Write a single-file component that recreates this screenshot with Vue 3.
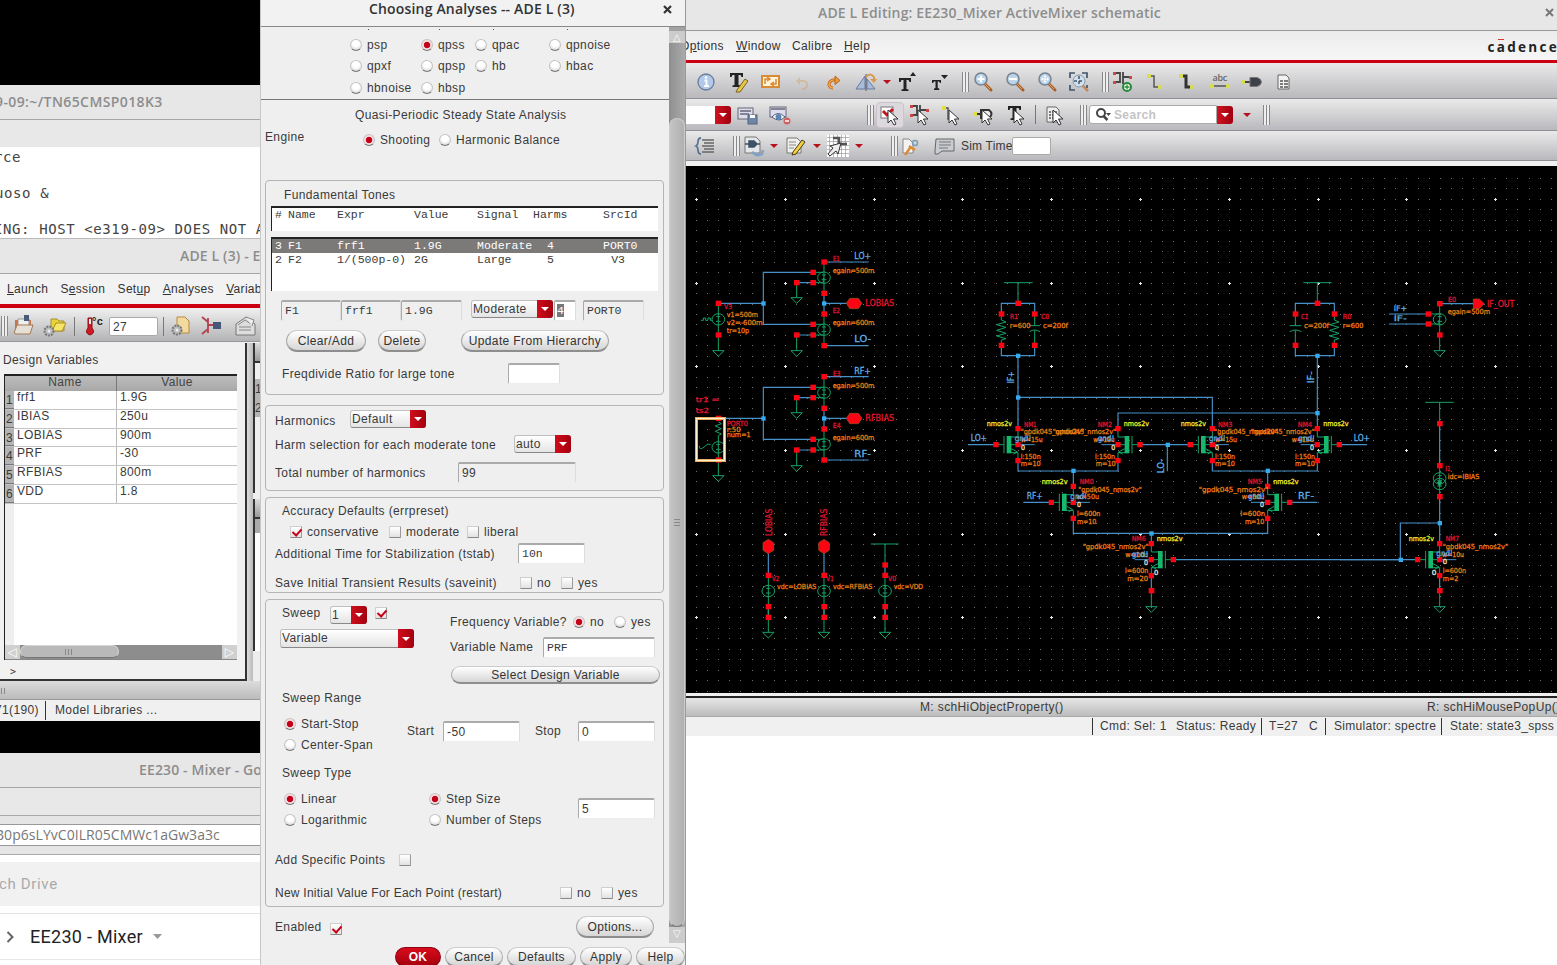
<script setup>
const radiosTop = [
  { t: 'psp' }, { t: 'qpss', on: true }, { t: 'qpac' }, { t: 'qpnoise' },
  { t: 'qpxf' }, { t: 'qpsp' }, { t: 'hb' }, { t: 'hbac' },
  { t: 'hbnoise' }, { t: 'hbsp' }
]
const vars = [
  ['frf1', '1.9G'], ['IBIAS', '250u'], ['LOBIAS', '900m'],
  ['PRF', '-30'], ['RFBIAS', '800m'], ['VDD', '1.8']
]

const cursor = '<path d="M9 6v13l3-3 3 5 2-1-2.500-5h4.500z" fill="#fff" stroke="#333" stroke-width="1"/>'
const glass = (inner) => '<path d="M13 13l6 6" stroke="#a8602c" stroke-width="3" stroke-linecap="round"/><path d="M13 13l5 5" stroke="#e0a060" stroke-width="1"/><circle cx="9" cy="8" r="6" fill="#b9d3e8" stroke="#778290" stroke-width="1.500"/>' + inner
const T = '<path d="M3 2h13v4h-1.500l-1-2H11.500v10l2 .5v1.500h-8V14.500l2-.5V4H5.500l-1 2H3z" fill="#222"/>'
const mosGlyph = '<path d="M2 2h6v5M2 11h6V8M8 2v9M11 1v12M11 6h7" stroke="#444" fill="none" stroke-width="1.800"/><path d="M1 1h3v3H1zM1 10h3v3H1zM17 5h3v3h-3z" fill="#c44"/>'
const icons = {
  info: '<circle cx="11" cy="11" r="8" fill="#b4c9ea" stroke="#697b9a" stroke-width="1.300"/><path d="M9.500 9.500h2V15M9 15.200h5" stroke="#fff" fill="none" stroke-width="1.800"/><circle cx="11" cy="6.500" r="1.300" fill="#fff"/>',
  tedit: T + '<path d="M10 19l8-11 3 2-8 11-4 0z" fill="#e8c840" stroke="#776020"/>',
  swap: '<rect x="3" y="5" width="17" height="11" fill="#fff3d8" stroke="#d98a35" stroke-width="2"/><path d="M6 13V8h4M8 6l3 2-3 2M17 8v5h-4M15 11l-3 2 3 2" stroke="#d98a35" fill="none" stroke-width="1.500"/>',
  undo: '<g opacity=".35"><path d="M7 10h6q4 1 3 5-1 3-5 3" stroke="#d9954a" fill="none" stroke-width="2"/><path d="M9 6l-4 4 4 4" fill="#d9954a"/></g>',
  redo: '<path d="M15 9H10q-4 1-4 5 1 3 4 3" stroke="#c86a18" fill="none" stroke-width="3"/><path d="M15 9H10q-4 1-4 5 1 3 4 3" stroke="#f3b25c" fill="none" stroke-width="1.200"/><path d="M12 5l5 4.500-5 4z" fill="#ee9838" stroke="#b8651a"/>',
  mirror: '<path d="M1 18L10 5v13zM20 18L12 8v10z" fill="#a9bcd9" stroke="#667aa0"/><path d="M11 3v17" stroke="#555"/><path d="M11 6q4-5 8 0v4" stroke="#d99a50" fill="none" stroke-width="2"/><path d="M15 8h7l-3 4z" fill="#d99a50"/>',
  tup: '<path d="M2 7h12v4h-1.500l-1-2H9.500v9l2 .5V20h-7v-1.500l2-.5V9H4.500l-1 2H2zM13 5h6l-3-4z" fill="#222"/>',
  tdn: '<path d="M3 9h9v3h-1l-1-1.500H8.700V17l1.500.5V19H5v-1.500l1.500-.5v-6.500H5L4 12H3zM12 4h7l-3.500 4z" fill="#222"/>',
  zin: glass('<path d="M9 4.500v7M5.500 8h7" stroke="#fff" stroke-width="2.200"/>'),
  zout: glass('<path d="M5 8h8" stroke="#fff" stroke-width="2.200"/>'),
  zfit: glass('<path d="M9 4l2 2H7zM9 12l2-2H7zM5 8l2-2v4zM13 8l-2-2v4z" fill="#fff"/><path d="M9 5v6M6 8h6" stroke="#fff"/>'),
  zsel: '<path d="M14 14l6 6" stroke="#c08a60" stroke-width="2.500"/><circle cx="11" cy="10" r="6" fill="#d0dfec" stroke="#8798a8"/><path d="M2 7V2h5M14 2h5v5M2 14v5h5M19 14v3" stroke="#41566b" fill="none" stroke-width="1.700"/><path d="M11 5v10M6 10h10" stroke="#41566b" stroke-width="1.500" stroke-dasharray="3 2"/>',
  inst: mosGlyph + '<circle cx="15" cy="16" r="4" fill="#fff" stroke="#278a38" stroke-width="2"/><path d="M15 13.500v5M12.500 16h5" stroke="#278a38" stroke-width="1.300"/>',
  wire: '<path d="M5 5h5v11h6" stroke="#555" fill="none" stroke-width="1.500"/><path d="M3 3h4v4H3zM14 14h4v4h-4z" fill="#d8dc50"/>',
  wireb: '<path d="M5 5h5v11h6" stroke="#333" fill="none" stroke-width="3"/><path d="M3 3h4v4H3zM14 14h4v4h-4z" fill="#d8dc50"/>',
  abc: '<text x="11" y="10" text-anchor="middle" font-family="Open Sans, sans-serif" font-size="9" font-weight="600" textLength="15" fill="#666">abc</text><path d="M3 15h16" stroke="#555" stroke-width="1.500"/><path d="M1 13h4v4H1zM17 13h4v4h-4z" fill="#d8dc50"/>',
  pin: '<path d="M2 11h8" stroke="#444" stroke-width="2"/><path d="M9 6.500h7q4 1 4.500 4.500-.5 3.500-4.500 4.500H9z" fill="#3c4048" stroke="#777"/><path d="M0 9h4v4H0z" fill="#d8dc50"/>',
  doc: '<path d="M5 4h8l3 3v11H5z" fill="#f2f2f2" stroke="#666"/><path d="M7 10h3M11 10h4M7 13h3M11 13h4M7 16h3M11 16h4" stroke="#555" stroke-width="1.500"/>',
  save: '<rect x="2" y="4" width="15" height="11" fill="#dde" stroke="#667"/><path d="M4 7h11M4 10h9" stroke="#667" stroke-width="1.500"/><rect x="12" y="11" width="9" height="9" fill="#6e87a8" stroke="#4f6380"/><path d="M14 11h5v3h-5z" fill="#fff"/>',
  eye: '<rect x="2" y="3" width="16" height="10" fill="#dde" stroke="#667"/><path d="M3 5h14" stroke="#667" stroke-width="1.500"/><path d="M4 13q6-7 13 0-6 6-13 0z" fill="#fff" stroke="#557"/><circle cx="10.500" cy="13" r="3" fill="#5b86b0"/><circle cx="19" cy="17" r="3.500" fill="#cf6262"/><path d="M17 17h4" stroke="#fff" stroke-width="1.500"/>',
  sel: '<rect x="2" y="3" width="12" height="11" fill="#fff" stroke="#777"/><path d="M4 7l4 4 6-6" stroke="#c21622" stroke-width="3" fill="none"/>' + cursor,
  inst2: mosGlyph + cursor,
  wire2: '<path d="M4 4h4v11h6" stroke="#555" fill="none" stroke-width="1.500"/><path d="M2 2h4v4H2z" fill="#e0e040"/>' + cursor,
  pin2: '<path d="M2 10h7" stroke="#333" stroke-width="2"/><path d="M8 6h8q5 4 0 8H8z" fill="#eee" stroke="#333" stroke-width="2"/><path d="M0 8h4v4H0z" fill="#e0e040"/>' + cursor,
  text2: T + cursor,
  doc2: '<path d="M3 3h9l3 3v12H3z" fill="#eee" stroke="#666"/><path d="M5 8h2M8 8h5M5 11h2M8 11h5M5 14h2M8 14h5" stroke="#555" stroke-width="1.500"/>' + cursor,
  tree: '<path d="M6 3q-3 0-3 4 0 3-2 4 2 1 2 4 0 4 3 4" stroke="#5a7597" stroke-width="1.800" fill="none"/><path d="M7 5h12M9 8h10M7 11h12M9 14h10M7 17h12" stroke="#666" stroke-width="1.500"/>',
  chk: '<path d="M3 2h11l4 4v12H3z" fill="#e4e6ea" stroke="#777"/><path d="M3 9h4M14 9h4M7 6h5l3 3-3 3H7z" fill="#3d5266" stroke="#3d5266" stroke-width="1.500"/><path d="M10 17q5 5 10 2l1-4" stroke="#7fa2c6" stroke-width="2.500" fill="none"/>',
  note: '<path d="M3 3h10l4 4v11H3z" fill="#f0f0ee" stroke="#777"/><path d="M5 7h7M5 10h7M5 13h5" stroke="#888"/><path d="M9 17l9-12 3 2-9 12-4 1z" fill="#f0cf45" stroke="#4a3a18"/>',
  grid: '<rect width="22" height="22" fill="#fff"/><path d="M2.500 0v22M6.500 0v22M10.500 0v22M14.500 0v22M18.500 0v22M0 2.500h22M0 6.500h22M0 10.500h22M0 14.500h22M0 18.500h22" stroke="#999" stroke-width=".7"/><path d="M6 3h6v6h8" fill="none" stroke="#555" stroke-width="2.500"/><path d="M14 8L3 11l3 2-5 6 2 2 6-5 2 3z" fill="#eee" stroke="#333"/>',
  docgear: '<path d="M3 4h6l4 4v10H3z" fill="#f3f3f3" stroke="#888"/><circle cx="15" cy="8" r="2.500" fill="none" stroke="#7b9db5" stroke-width="1.500"/><path d="M5 20l5-7M9 11l6 4" stroke="#db8b35" stroke-width="2.500"/>',
  chat: '<path d="M3 4h18v12H9l-4 3-3 0v-3z" fill="#c9ccd1" stroke="#666"/><path d="M6 7h12M6 10h12M6 13h9" stroke="#777"/>',
  open: '<path d="M3 5h16v13H3z" fill="#c6764a"/><path d="M6 4h11v9H6z" fill="#eee" stroke="#999"/><path d="M2 18l3-8h16l-3 9H4z" fill="#e6dfd6" stroke="#a47a55"/><path d="M12 0h5v6h-5z" fill="#4b5a78"/>',
  folder: '<path d="M9 4h6l2 2h5v10H9z" fill="#e8d23a" stroke="#a8902a"/><path d="M10 16l4-8h10l-4 8z" fill="#f5e668" stroke="#a8902a"/><circle cx="7" cy="16" r="4.500" fill="#bbb" stroke="#777" stroke-width="2" stroke-dasharray="2 1"/><circle cx="7" cy="16" r="1.500" fill="#eee"/>',
  temp: '<path d="M5 3h4v10q4 5-2 7-6-2-2-7z" fill="#d01a22" stroke="#881018"/><path d="M6 4h2v5H6z" fill="#eee"/><text x="9" y="10" font-family="Liberation Sans, sans-serif" font-weight="bold" font-size="11" fill="#222">°c</text>',
  filegear: '<path d="M7 2h8l4 4v12H7z" fill="#f1d9a0" stroke="#b58b3c"/><circle cx="7" cy="15" r="4.500" fill="#bbb" stroke="#777" stroke-width="2" stroke-dasharray="2 1"/><circle cx="7" cy="15" r="1.500" fill="#eee"/>',
  probe: '<path d="M2 2l6 5v7l-6 5M8 3v15M8 10h7" fill="none" stroke="#b04450" stroke-width="1.800"/><path d="M13 7h8v7h-8z" fill="#47577a"/>',
  env: '<path d="M2 9l10-7 9 7v11H2z" fill="#ddd" stroke="#777"/><path d="M4 10l7-5 6 4M5 12h12M5 15h12" stroke="#888" fill="none"/><path d="M12 2l8 3-2 6" fill="#eee" stroke="#888"/>'
}
const bar1 = ['info', 'tedit', 'swap', 'undo', 'redo', 'mirror', '>', 'tup', 'tdn', '|', 'zin', 'zout', 'zfit', 'zsel', '|', 'inst', 'wire', 'wireb', 'abc', 'pin', 'doc']
const bar3 = ['tree', '|', 'chk', '>', 'note', '>', 'grid', '>', '|', 'docgear', 'chat']

// Grid of the schematic sheet: faint minor dots, a brighter one every eighth step.
const minor = []
const major = []
for (let i = 0; i <= 78; i++) {
  for (let j = 0; j <= 49; j++) {
    const x = Math.round(696 + i * 11.1)
    const y = Math.round(178 + j * 10.46)
    if (i % 8 === 0 && j % 8 === 2) major.push(`M${x - 1} ${y}h3v1h-3zM${x} ${y - 1}h1v3h-1z`)
    else minor.push(`M${x} ${y}h1v1h-1z`)
  }
}
const minorPath = minor.join('')
const majorPath = major.join('')

const R = '#e31530', O = '#f07f14', Y = '#f2f22a', B = '#5fb2ea', W = '#f4eede'
// Text entries: x, y, string, colour, length, size, rotation
const sheets = [
  {
    tf: 'translate(686 240) scale(.33333)',
    wire: 'M414 66H548M381 97H232V253H381M97 190H232M332 128H381M332 285H381M414 160V222M414 190H485M414 317H548M414 410H548M381 442H232V598H381M119 535H232M332 473H381M332 630H381M414 505V567M414 535H485M414 660H548M247 935V1006M247 1100V1132M414 935V1006M414 1100V1132M597 975V1006M597 1100V1132',
    dev: 'M414 66V160M414 222V317M381 97H412M381 128H412V113M381 253H412M381 285H412M332 128V172M332 285V332M97 190V332M45 241h7v-7h7v7h7v-7h7v7h6M414 410V505M414 567V660M381 442H412M381 473H412M381 598H412M381 630H412M332 473V518M332 630V677M97 545l9 6-18 7 18 8-18 8 18 8-9 5V707M40 618q0 12 10 6t12-10 12 0M247 1006V1176M414 1006V1176M597 1006V1176M555 912H638M597 912V975',
    circles: [[414, 113], [414, 269], [97, 238], [414, 458], [414, 613], [97, 622], [247, 1053], [414, 1053], [597, 1053]],
    gnd: [[332, 173], [332, 332], [97, 332], [332, 518], [332, 677], [97, 707], [247, 1177], [414, 1177], [597, 1177]],
    pins: [[414, 66], [381, 97], [381, 128], [332, 128], [414, 160], [414, 222], [381, 253], [381, 285], [332, 285], [414, 317], [97, 190], [97, 285], [414, 410], [381, 442], [381, 473], [332, 473], [414, 505], [414, 567], [381, 598], [381, 630], [332, 630], [414, 660], [97, 535], [97, 660], [247, 1006], [247, 1100], [247, 1132], [414, 1006], [414, 1100], [414, 1132], [597, 975], [597, 1006], [597, 1100], [597, 1132]],
    nodes: [[232, 190], [414, 190], [232, 535], [414, 535]],
    mos: [],
    terms: 'M481 190l10-15h26l11 15-11 16h-26zM481 535l10-15h26l11 15-11 16h-26zM247 898l16 10v23l-16 10-16-10v-23zM414 898l16 10v23l-16 10-16-10v-23z',
    texts: [
      [441, 63, 'E1', R, 20], [505, 56, 'LO+', B, 50, 25], [440, 98, 'egain=500m', O, 125], [538, 199, 'LOBIAS', R, 86, 25],
      [440, 218, 'E2', R, 22], [440, 254, 'egain=600m', O, 125], [505, 307, 'LO-', B, 50, 25],
      [114, 207, 'V3', R, 24], [122, 232, 'v1=500m', O, 94], [122, 254, 'v2=-600m', O, 108], [122, 278, 'tr=10p', O, 67],
      [441, 408, 'E3', R, 22], [505, 401, 'RF+', B, 50, 25], [440, 443, 'egain=500m', O, 125], [538, 544, 'RFBIAS', R, 86, 25],
      [440, 564, 'E4', R, 24], [440, 599, 'egain=600m', O, 125], [505, 652, 'RF-', B, 50, 25],
      [29, 487, 'tr1 =', R, 70], [29, 519, 'ts2', R, 40], [122, 559, 'PORT0', R, 64], [122, 576, 'r:50', O, 42], [122, 591, 'num=1', O, 72],
      [257, 888, 'LOBIAS', R, 82, 25, -90], [424, 888, 'RFBIAS', R, 82, 25, -90],
      [258, 1022, 'V2', R, 22], [421, 1022, 'V1', R, 22], [606, 1022, 'V0', R, 24],
      [273, 1046, 'vdc=LOBIAS', O, 118], [441, 1046, 'vdc=RFBIAS', O, 118], [623, 1046, 'vdc=VDD', O, 88]
    ]
  },
  {
    tf: 'translate(960 270) scale(.33333)',
    wire: 'M124 132V100H224V132M124 226V257H224V226M174 257V476M174 382H757V476M474 476V429H1072M1072 257V476M1006 132V100H1123V132M1006 226V257H1123V226M24 524H108M541 524H690M622 524V604M1140 524H1221M174 572V603H474V572M757 572V603H1072V572M340 603V650M923 603V650M190 697H274M990 697H1072M340 744V790H923V744M574 790V822M640 869H1320M574 916V962',
    dev: 'M132 38H218M174 38V100M1030 38H1115M1072 38V100M124 132V150l14 6-28 8 28 8-28 9 28 9-28 8 28 8-14 4V226M224 132V167M209 167H240M209 185q15-10 31 0M224 181V226M1006 132V167M989 167H1024M989 185q17-10 35 0M1006 181V226M1123 132V150l14 6-28 8 28 8-28 9 28 9-28 8 28 8-14 4V226M574 962V1010',
    circles: [],
    gnd: [[574, 1010]],
    pins: [[174, 100], [124, 132], [224, 132], [124, 226], [224, 226], [1072, 100], [1006, 132], [1123, 132], [1006, 226], [1123, 226], [574, 962]],
    nodes: [[174, 257], [1072, 257], [174, 382], [1072, 429], [623, 524], [340, 602], [923, 602], [574, 790]],
    mos: [[174, 524, 1], [474, 524, -1], [757, 524, 1], [1072, 524, -1], [340, 697, 1], [923, 697, -1], [574, 869, -1]],
    terms: '',
    texts: [
      [150, 148, 'R1', R, 24], [243, 148, 'C0', R, 25], [149, 173, 'r=600', O, 62], [249, 173, 'c=200f', O, 75],
      [1023, 148, 'C1', R, 22], [1032, 173, 'c=200f', O, 75], [1148, 148, 'R0', R, 26], [1148, 173, 'r=600', O, 62],
      [162, 340, 'IF+', B, 36, 25, -90], [1062, 340, 'IF-', B, 36, 25, -90],
      [80, 469, 'nmos2v', Y, 76], [192, 470, 'NM1', R, 38], [413, 470, 'NM2', R, 43], [491, 469, 'nmos2v', Y, 76],
      [662, 469, 'nmos2v', Y, 76], [774, 470, 'NM3', R, 43], [1013, 470, 'NM4', R, 43], [1090, 469, 'nmos2v', Y, 76],
      [182, 492, '"gpdk045_nmos2v"', O, 190], [278, 492, '"gpdk045_nmos2v"', O, 190],
      [763, 492, '"gpdk045_nmos2v"', O, 190], [874, 492, '"gpdk045_nmos2v"', O, 190],
      [182, 515, 'w=15u', O, 66], [400, 515, 'w=15u', O, 64], [765, 515, 'w=15u', O, 66], [995, 515, 'w=15u', O, 66],
      [164, 514, 'gnd!', B, 50, 24], [413, 514, 'gnd!', B, 50, 24], [747, 514, 'gnd!', B, 50, 24], [1015, 514, 'gnd!', B, 50, 24],
      [182, 566, 'l:150n', O, 60], [182, 588, 'm=10', O, 60], [405, 566, 'l:150n', O, 60], [407, 588, 'm=10', O, 60],
      [765, 566, 'l:150n', O, 60], [765, 588, 'm=10', O, 60], [1005, 566, 'l:150n', O, 60], [1005, 588, 'm=10', O, 60],
      [32, 514, 'LO+', B, 49, 25], [1181, 514, 'LO+', B, 49, 25], [613, 610, 'LO-', B, 44, 25, -90],
      [183, 540, '0', W, 12], [454, 540, '0', W, 12], [765, 540, '0', W, 12], [1050, 540, '0', W, 12],
      [245, 642, 'nmos2v', Y, 78], [359, 642, 'NM0', R, 42], [863, 642, 'NM5', R, 43], [940, 641, 'nmos2v', Y, 76],
      [355, 666, '"gpdk045_nmos2v"', O, 190], [716, 666, '"gpdk045_nmos2v"', O, 210],
      [349, 688, 'w=50u', O, 68], [845, 688, 'w=50u', O, 68], [331, 687, 'gnd!', B, 50, 24], [864, 687, 'gnd!', B, 50, 24],
      [351, 712, '0', W, 12], [900, 712, '0', W, 12],
      [351, 737, 'l=600n', O, 70], [351, 761, 'm=10', O, 58], [841, 737, 'l=600n', O, 74], [855, 761, 'm=10', O, 58],
      [200, 687, 'RF+', B, 48, 25], [1014, 687, 'RF-', B, 48, 25],
      [515, 814, 'NM6', R, 42], [590, 814, 'nmos2v', Y, 78], [368, 838, '"gpdk045_nmos2v"', O, 198],
      [496, 861, 'w=10u', O, 68], [515, 860, 'gnd!', B, 50, 24], [552, 884, '0', W, 12], [582, 915, '0', W, 13],
      [495, 909, 'l=600n', O, 70], [502, 933, 'm=20', O, 62]
    ]
  },
  {
    tf: 'translate(1340 280) scale(.33333)',
    wire: 'M299 71H400M147 102H265M147 132H265M299 431V557M299 650V791M299 729H181V839H232M0 839H232M299 886V932',
    dev: 'M299 71V212M265 102H297M265 132H297V120M256 367H341M299 367V431M299 557V650M299 932V980',
    circles: [[299, 118], [299, 595], [299, 612]],
    gnd: [[299, 212], [299, 980]],
    pins: [[299, 71], [265, 102], [265, 132], [299, 165], [299, 431], [299, 557], [299, 650], [299, 932]],
    nodes: [[299, 729], [182, 839]],
    mos: [[299, 839, 1]],
    terms: 'M400 57h18l15 14-15 15h-18z',
    texts: [
      [324, 66, 'E0', R, 24], [323, 103, 'egain=500m', O, 127], [441, 80, 'IF_OUT', R, 82, 25],
      [161, 92, 'IF+', B, 40, 23], [161, 122, 'IF-', B, 40, 23],
      [316, 574, 'I1', R, 16], [323, 597, 'idc=IBIAS', O, 95],
      [206, 784, 'nmos2v', Y, 76], [317, 784, 'NM7', R, 40], [308, 807, '"gpdk045_nmos2v"', O, 196],
      [306, 831, 'w=10u', O, 66], [289, 829, 'gnd!', B, 50, 24], [308, 853, '0', W, 13], [275, 884, '0', W, 14],
      [308, 880, 'l=600n', O, 70], [308, 902, 'm=2', O, 47]
    ]
  }
]
</script>

<template>
  <main class="desk">
    <section class="win term">
      <header class="ttl"><span>9-09:~/TN65CMSP018K3</span></header>
      <div class="strip"></div>
      <pre class="shell"><span>rce</span><span>uoso &amp;</span><span>ING: HOST &lt;e319-09&gt; DOES NOT A</span></pre>
    </section>

    <section class="win ade">
      <header class="ttl"><span>ADE L (3) - E</span></header>
      <nav class="menu"><span><u>L</u>aunch</span><span>S<u>e</u>ssion</span><span>Set<u>u</u>p</span><span><u>A</u>nalyses</span><span><u>V</u>ariables</span></nav>
      <div class="adebar">
        <i class="grip"></i>
        <svg class="ic" v-html="icons.open"></svg>
        <svg class="ic" v-html="icons.folder"></svg>
        <i class="vl"></i>
        <svg class="ic" v-html="icons.temp"></svg>
        <span class="deg">27</span>
        <i class="vl"></i>
        <svg class="ic" v-html="icons.filegear"></svg>
        <svg class="ic" v-html="icons.probe"></svg>
        <svg class="ic" v-html="icons.env"></svg>
      </div>
      <div class="adebody">
        <div class="dv">
          <div class="dvt">Design Variables</div>
          <div class="tbl">
            <div class="th"><span></span><span>Name</span><span>Value</span></div>
            <div v-for="(v, i) in vars" :key="v[0]" class="tr"><b>{{ i + 1 }}</b><span>{{ v[0] }}</span><span>{{ v[1] }}</span></div>
            <div class="fill"></div>
            <div class="hs"><i>◁</i><div><em><i class="grip sm"></i></em></div><i>▷</i></div>
          </div>
          <div class="prompt">&gt;</div>
        </div>
        <div class="gut"></div>
        <div class="side">
          <div class="s1"></div><div class="s2"><span>1</span><span>2</span></div><div class="s3"></div><div class="s4"></div>
        </div>
      </div>
      <div class="adehint"><i class="grip sm"></i></div>
      <footer class="adefoot"><span>71(190)</span><i></i><span>Model Libraries ...</span></footer>
    </section>

    <section class="win web">
      <header class="ttl"><span>EE230 - Mixer - Go</span></header>
      <div class="tabs"></div>
      <div class="url"><span>B0p6sLYvC0ILR05CMWc1aGw3a3c</span></div>
      <div class="srch"><span>ch Drive</span></div>
      <div class="crumb">
        <svg width="10" height="14"><path d="M1.500 2l5 5-5 5" fill="none" stroke="#666" stroke-width="2" /></svg>
        <span>EE230 - Mixer</span>
        <svg width="10" height="6"><path d="M0 0h9l-4.500 5z" fill="#999" /></svg>
      </div>
    </section>

    <section class="win sch">
      <header class="ttl big"><span>ADE L Editing: EE230_Mixer ActiveMixer schematic</span><svg class="x" viewBox="0 0 10 10"><path d="M1 1l7 7M8 1l-7 7" /></svg></header>
      <nav class="menu smenu">
        <span>O<u>p</u>tions</span><span><u>W</u>indow</span><span>Calibre</span><span><u>H</u>elp</span>
        <div class="logo">c<span>a<i></i></span>dence</div>
      </nav>
      <div class="bar b1">
        <template v-for="(k, i) in bar1" :key="i">
          <i v-if="k === '|'" class="grip"></i>
          <i v-else-if="k === '>'" class="car"></i>
          <svg v-else class="ic" v-html="icons[k]"></svg>
        </template>
      </div>
      <div class="bar b2">
        <div class="cbx"></div><div class="redb"><i></i></div>
        <svg class="ic" v-html="icons.save"></svg>
        <svg class="ic" v-html="icons.eye"></svg>
        <i class="grip first"></i>
        <div class="hot"><svg class="ic" v-html="icons.sel"></svg></div>
        <svg class="ic" v-html="icons.inst2"></svg>
        <svg class="ic" v-html="icons.wire2"></svg>
        <svg class="ic" v-html="icons.pin2"></svg>
        <svg class="ic" v-html="icons.text2"></svg>
        <i class="vl"></i>
        <svg class="ic" v-html="icons.doc2"></svg>
        <i class="grip"></i>
        <div class="find"><svg width="18" height="16"><circle cx="7" cy="6" r="4" fill="none" stroke="#444" stroke-width="2" /><path d="M9.500 9l4 4" stroke="#444" stroke-width="2.500" /><path d="M12 6h5l-2.500 3z" fill="#444" /></svg><span>Search</span></div>
        <div class="redb"><i></i></div>
        <i class="car"></i>
        <i class="grip"></i>
      </div>
      <div class="bar b3">
        <template v-for="(k, i) in bar3" :key="i">
          <i v-if="k === '|'" class="grip"></i>
          <i v-else-if="k === '>'" class="car"></i>
          <svg v-else class="ic" v-html="icons[k]"></svg>
        </template>
        <span class="sim">Sim Time</span><div class="simin"></div>
      </div>
      <svg class="canvas" viewBox="686 166 871 527">
        <path :d="minorPath" fill="#6f7076" />
        <path :d="majorPath" fill="#e8e8e8" />
        <g v-for="(s, n) in sheets" :key="n" :transform="s.tf" fill="none" stroke-width="3">
          <path :d="s.wire" stroke="#4791c9" stroke-width="3.500" />
          <g stroke="#17a368">
            <path :d="s.dev" />
            <path v-for="(g, i) in s.gnd" :key="'g' + i" :d="`M${g[0] - 17} ${g[1]}h34l-17 17z`" />
            <g v-for="(c, i) in s.circles" :key="'c' + i">
              <ellipse :cx="c[0]" :cy="c[1]" rx="19" ry="17" />
              <path :d="`M${c[0] - 6} ${c[1] - 8}h12M${c[0] - 7} ${c[1] + 6}h14`" />
            </g>
            <g v-for="(m, i) in s.mos" :key="'m' + i" :transform="`translate(${m[0]} ${m[1]}) scale(${m[2]} 1)`">
              <path d="M0 0H50" stroke="#4791c9" />
              <path d="M-66 0H-42M-42-26V26M-22-23H0V-48M-22 0H0M-22 24H0V48M-20 12l18 10-12 6" />
              <rect x="-34" y="-26" width="14" height="52" fill="#17b86e" stroke="none" />
              <path d="M-8-56H8v16H-8zM-8 40H8v16H-8zM-8-8H8V8H-8zM-74-8h16V8h-16z" fill="#fb0414" stroke="none" />
            </g>
          </g>
          <path v-for="(p, i) in s.pins" :key="'p' + i" :d="`M${p[0] - 8} ${p[1] - 8}h17v16h-17z`" fill="#fb0414" />
          <path v-for="(p, i) in s.nodes" :key="'n' + i" :d="`M${p[0] - 6} ${p[1] - 6}h13v13h-13z`" fill="#35aaf0" />
          <path v-if="s.terms" :d="s.terms" fill="#fb0414" stroke="#8a5a20" stroke-width="2" />
          <text v-for="(t, i) in s.texts" :key="'t' + i" :transform="`translate(${t[0]} ${t[1]}) rotate(${t[6] || 0})`" :fill="t[3]" :stroke="t[3]" stroke-width=".8" :textLength="t[4]" :font-size="t[5] || 21" lengthAdjust="spacingAndGlyphs" class="lbl">{{ t[2] }}</text>
        </g>
        <path d="M1437 482h5l-2.500 5z" fill="#17b86e" />
        <path d="M696.500 418.500h28v42h-28z" fill="none" stroke="#e9ad63" stroke-width="3" />
        <path d="M696.500 418.500h28v42h-28z" fill="none" stroke="#fff0cf" stroke-width="1" />
      </svg>
      <div class="mouse"><span></span><span>M: schHiObjectProperty()</span><span>R: schHiMousePopUp()</span></div>
      <footer class="stat"><span>Cmd: Sel: 1</span><span>Status: Ready</span><span>T=27</span><span>C</span><span>Simulator: spectre</span><span>State: state3_spss</span></footer>
    </section>

    <section class="win dlg">
      <header class="dt"><span>Choosing Analyses -- ADE L (3)</span><svg class="x" viewBox="0 0 10 10"><path d="M1 1l7 7M8 1l-7 7" /></svg></header>
      <div class="dmain">
        <div class="pane">
          <div class="tails"><i></i><i></i><i></i><i></i></div>
          <div class="rads"><label v-for="r in radiosTop" :key="r.t"><i class="rd" :class="{ on: r.on }"></i>{{ r.t }}</label></div>
          <div class="qt">Quasi-Periodic Steady State Analysis</div>
          <div class="row eng"><span>Engine</span><label><i class="rd on"></i>Shooting</label><label><i class="rd"></i>Harmonic Balance</label></div>

          <div class="fs f1">
            <div class="cap">Fundamental Tones</div>
            <div class="lst lh"><div><span>#</span><span>Name</span><span>Expr</span><span>Value</span><span>Signal</span><span>Harms</span><span>SrcId</span></div></div>
            <div class="lst lb">
              <div class="hl"><span>3</span><span>F1</span><span>frf1</span><span>1.9G</span><span>Moderate</span><span>4</span><span>PORT0</span></div>
              <div><span>2</span><span>F2</span><span>1/(500p-0)</span><span>2G</span><span>Large</span><span>5</span><span>V3</span></div>
            </div>
            <div class="row ed">
              <div class="in ro">F1</div><div class="in ro">frf1</div><div class="in ro">1.9G</div>
              <div class="cb"><span>Moderate</span><i></i></div><div class="in four"><mark>4</mark></div><div class="in ro">PORT0</div>
            </div>
            <div class="row bt"><button>Clear/Add</button><button>Delete</button><button>Update From Hierarchy</button></div>
            <div class="row fq"><span>Freqdivide Ratio for large tone</span><div class="in"></div></div>
          </div>

          <div class="fs f2">
            <div class="row h1"><span>Harmonics</span><div class="cb"><span>Default</span><i></i></div></div>
            <div class="row h2"><span>Harm selection for each moderate tone</span><div class="cb"><span>auto</span><i></i></div></div>
            <div class="row h3"><span>Total number of harmonics</span><div class="in ro sans">99</div></div>
          </div>

          <div class="fs f3">
            <div class="cap">Accuracy Defaults (errpreset)</div>
            <div class="row a1"><label><i class="ck on"></i>conservative</label><label><i class="ck"></i>moderate</label><label><i class="ck"></i>liberal</label></div>
            <div class="row a2"><span>Additional Time for Stabilization (tstab)</span><div class="in">10n</div></div>
            <div class="row a3"><span>Save Initial Transient Results (saveinit)</span><label><i class="ck"></i>no</label><label><i class="ck"></i>yes</label></div>
          </div>

          <div class="fs f4">
            <div class="two">
              <div class="lc">
                <div class="row sw"><span>Sweep</span><div class="cb"><span>1</span><i></i></div><i class="ck on"></i></div>
                <div class="cb wide"><span>Variable</span><i></i></div>
              </div>
              <div class="rc">
                <div class="row v1"><span>Frequency Variable?</span><label><i class="rd on"></i>no</label><label><i class="rd"></i>yes</label></div>
                <div class="row v2"><span>Variable Name</span><div class="in">PRF</div></div>
                <button>Select Design Variable</button>
              </div>
            </div>
            <div class="cap c2">Sweep Range</div>
            <div class="row s">
              <div class="st"><label><i class="rd on"></i>Start-Stop</label><label><i class="rd"></i>Center-Span</label></div>
              <span>Start</span><div class="in sans">-50</div><span class="stop">Stop</span><div class="in sans">0</div>
            </div>
            <div class="cap c3">Sweep Type</div>
            <div class="row t">
              <div class="st"><label><i class="rd on"></i>Linear</label><label><i class="rd"></i>Logarithmic</label></div>
              <div class="st"><label><i class="rd on"></i>Step Size</label><label><i class="rd"></i>Number of Steps</label></div>
              <div class="in sans">5</div>
            </div>
            <div class="row p1"><span>Add Specific Points</span><i class="ck"></i></div>
            <div class="row p2"><span>New Initial Value For Each Point (restart)</span><label><i class="ck"></i>no</label><label><i class="ck"></i>yes</label></div>
          </div>
          <div class="row en"><span>Enabled</span><i class="ck on"></i><button>Options...</button></div>
        </div>
        <div class="vs"><i>△</i><div class="trk"><em><i></i></em></div><i>▽</i></div>
      </div>
      <footer class="acts"><button class="ok">OK</button><button>Cancel</button><button>Defaults</button><button>Apply</button><button>Help</button></footer>
    </section>
  </main>
</template>

<style>
body { margin: 0; overflow: hidden; background: #fff; }
</style>

<style scoped>
* { box-sizing: border-box; }
.desk { position: relative; width: 1557px; height: 965px; overflow: hidden; background: #fff; font: 12px/14px "Liberation Sans", sans-serif; letter-spacing: .37px; color: #3a3a3a; white-space: nowrap; }
.desk i { font-style: normal; }
.win { position: absolute; overflow: hidden; display: flex; flex-direction: column; }
.ttl { display: flex; align-items: center; flex: none; background: #e7e7e7; border-bottom: 1px solid #a5a5a5; color: #8d8d8d; font: 600 14px/20px "Open Sans", "Noto Sans", sans-serif; letter-spacing: .14px; }
.term { left: 0; top: 0; width: 260px; height: 238px; border-top: 85px solid #000; background: #fff; }
.term .ttl { height: 35px; letter-spacing: .4px; }
.term .ttl span { margin-left: -5px; }
.strip { height: 27px; flex: none; background: #e8e8e8; }
.shell { margin: 0; display: flex; flex-direction: column; font: 14px/36px "DejaVu Sans Mono", monospace; letter-spacing: .6px; color: #444; margin-top: -8px; }
.shell span:nth-child(1) { margin-left: -6px; }
.shell span:nth-child(2) { margin-left: -5px; }
.shell span:nth-child(3) { margin-left: -6px; }

.ade { left: 0; top: 238px; width: 260px; height: 515px; background: #f0f0f0; border-bottom: 32px solid #000; }
.ade .ttl { height: 36px; padding-left: 180px; border-top: 1px solid #bbb; }
.menu { display: flex; align-items: center; flex: none; color: #333; background: #f2f2f2; }
.ade .menu { height: 30px; padding-left: 7px; gap: 12.300px; letter-spacing: .3px; }
.adebar { height: 38px; flex: none; border-top: 4px solid #cc0011; background: linear-gradient(#f0f0f0, #b4b4b6); display: grid; grid-template-columns: 9px 28px 32px 10px 29px 50px 10px 26px 34px 34px; align-items: center; border-bottom: 1px solid #999; padding-top: 3px; }
.ic { width: 22px; height: 22px; display: block; overflow: visible; justify-self: center; }
.grip { display: block; width: 7px; height: 20px; background: repeating-linear-gradient(90deg, #888 0 1px, #eee 1px 3px); justify-self: center; }
.grip.sm { height: 6px; width: 9px; background: repeating-linear-gradient(90deg, #888 0 1px, transparent 1px 3px); }
.vl { display: block; width: 1px; height: 19px; background: #777; justify-self: center; }
.deg { height: 19px; margin-left: 1px; border: 1px solid #aaa; border-radius: 2px; background: #fff; padding: 2px 3px; }
.adebody { display: flex; height: 339px; flex: none; padding-top: 1px; }
.dv { width: 247px; border-right: 2px solid #333; border-bottom: 2px solid #333; display: flex; flex-direction: column; padding-left: 4px; background: #f1f1f1; }
.dvt { height: 31px; line-height: 35px; margin-left: -1px; flex: none; }
.tbl { width: 233px; height: 286px; border-top: 2px solid #222; border-left: 1px solid #222; display: flex; flex-direction: column; background: linear-gradient(90deg, #efefef 0 9px, #fff 9px); }
.th { display: grid; grid-template-columns: 9px 102px 1fr; height: 15px; line-height: 13px; flex: none; background: linear-gradient(#bdbdbd, #a8a8a8); text-align: center; color: #444; }
.th span:nth-child(3) { border-left: 1px solid #777; }
.tr { display: grid; grid-template-columns: 9px 102px 1fr; height: 18.800px; flex: none; border-bottom: 1px solid #c4c4c4; }
.tr b { font-weight: 400; background: #b3b3b3; border-bottom: 1px solid #777; line-height: 19px; overflow: hidden; text-indent: 1px; }
.tr span { padding-left: 3px; line-height: 12px; }
.tr span:nth-child(3) { border-left: 1px solid #bbb; }
.fill { flex: 1; }
.hs { height: 15px; flex: none; display: grid; grid-template-columns: 15px 1fr 15px; background: #d0d0d0; border-bottom: 1px solid #888; color: #fff; font-family: "DejaVu Sans", sans-serif; text-align: center; }
.hs > div { background: #8d8d8d; }
.hs em { display: flex; align-items: center; justify-content: center; width: 99px; height: 13px; border-radius: 8px; background: #b9b9b9; border: 1px solid #d5d5d5; border-bottom-color: #777; }
.prompt { padding: 5px 6px 0; font-family: "DejaVu Sans Mono", monospace; font-size: 10px; }
.gut { width: 6px; background: linear-gradient(90deg, #ddd, #bbb); }
.side { width: 7px; display: flex; flex-direction: column; background: #eee; }
.side > div { border-left: 2px solid #333; }
.s1 { height: 20px; background: linear-gradient(#ddd, #999); border-bottom: 2px solid #333; }
.s2 { height: 130px; display: flex; flex-direction: column; padding-top: 16px; line-height: 20px; }
.s2 span { background: #b3b3b3; overflow: hidden; height: 19px; }
.s3 { margin-top: 6px; height: 20px; background: linear-gradient(#ddd, #999); border-bottom: 2px solid #333; }
.s4 { height: 132px; background: linear-gradient(#aaa 0 14px, #fff 14px); }
.adehint { height: 19px; flex: none; background: linear-gradient(#dcdcdc, #bbb); border-bottom: 1px solid #999; padding: 7px 0 0 1px; }
.adehint .grip { width: 6px; justify-self: start; }
.adefoot { display: flex; align-items: center; height: 20px; background: #f0f0f0; }
.adefoot span:first-child { margin-left: -5px; width: 50px; }
.adefoot i { width: 1px; height: 19px; background: #333; margin-right: 9px; }

.web { left: 0; top: 753px; width: 260px; height: 212px; background: #fff; }
.web .ttl { height: 35px; padding-left: 139px; }
.tabs { height: 28px; flex: none; background: #e8e8e8; border-bottom: 1px solid #aaa; }
.url { height: 39px; flex: none; padding: 8px 0; background: #e5e5e5; border-bottom: 1px solid #aaa; display: flex; }
.url span { flex: 1; height: 22px; background: #fff; border: solid #999; border-width: 1px 0; font: 14px/20px "Open Sans", sans-serif; color: #777; letter-spacing: .05px; text-indent: -5px; }
.srch { height: 59px; flex: none; padding: 7px 0; border-bottom: 1px solid #e4e4e4; display: flex; }
.srch span { flex: 1; background: #f1f1f1; color: #aaa; font: 15px/44px Roboto, sans-serif; letter-spacing: .65px; text-indent: -1px; }
.crumb { display: flex; align-items: center; height: 46px; border-bottom: 1px solid #e6e6e6; padding-left: 6px; font: 18px/24px Roboto, sans-serif; letter-spacing: .28px; color: #222; }
.crumb span { margin: 0 10px 0 14px; }

.sch { left: 686px; top: 0; width: 871px; height: 736px; background: #f0f0f0; }
.sch .ttl { height: 31px; padding: 0 0 4px 132px; border-color: #999; }
.x { width: 10px; height: 10px; stroke: #777; stroke-width: 2; fill: none; }
.sch .ttl span { width: 727px; }
.smenu { height: 29px; padding-left: 2px; background: linear-gradient(#ececec, #f6f6f6); }
.smenu > span:nth-child(1) { width: 56px; margin-left: -8px; }
.smenu > span:nth-child(2) { width: 56px; margin-left: 0; }
.smenu > span:nth-child(3) { width: 52px; }
.smenu > span:nth-child(4) { width: 52px; }
.logo { margin-left: auto; margin-top: 3px; font: 700 13.500px/14px "Open Sans", sans-serif; letter-spacing: 2.300px; color: #222; margin-right: -2px; }
.logo span { position: relative; }
.logo i { position: absolute; left: 1px; top: 1px; width: 6px; height: 1px; background: #d33; }
.bar { flex: none; display: grid; align-items: center; background: linear-gradient(#eaeaea, #b9b9bd); border-bottom: 1px solid #8f8f95; }
.b1 { height: 39px; border-top: 3px solid #cc0011; grid-template-columns: repeat(6, 32px) 10px 32px 32px 11px repeat(4, 32px) 12px repeat(6, 32.200px); padding: 3px 0 0 4px; }
.b1 > .grip { justify-self: end; margin-right: -2px; }
.b2 { height: 32px; grid-template-columns: 29px 16px 32px 32px 75px 34px 31px 32px 33px 31px 8px 32px 18px 128px 16px 28px 9px; }
.b2 > .grip { justify-self: end; margin-right: 2px; }
.b2 > .grip.first { margin-right: -4px; }
.b2 > .grip:last-child { margin: 0; }
.b3 { height: 30px; padding-left: 4px; grid-template-columns: 32px 20px 22px 20px 22px 22px 20px 22px 30px 33px 22px 57px 39px; }
.b3 > .grip { justify-self: end; margin-right: 2px; }
.b3 > .ic:nth-child(10) { justify-self: start; }
.sim { margin-left: 6px; letter-spacing: .2px; }
.simin { width: 39px; height: 18px; background: #fff; border: 1px solid #aaa; border-radius: 2px; }
.car { width: 0; height: 0; border: 4px solid transparent; border-top-color: #b5121d; border-bottom: 0; justify-self: center; flex: none; }
.cbx { height: 18px; background: #fff; }
.redb { height: 18px; background: linear-gradient(90deg, #cf1420, #a00010); border-radius: 0 3px 3px 0; display: flex; align-items: center; justify-content: center; }
.redb i, .cb > i::after { content: ""; width: 0; height: 0; border: 4px solid transparent; border-top-color: #fff; border-bottom: 0; }
.hot { width: 28px; height: 26px; border-radius: 4px; background: #ddd8dd; border: 1px solid #cbc5cb; display: flex; align-items: center; justify-content: center; margin-left: 6px; }
.find { height: 19px; background: #fff; border: 1px solid #aaa; border-radius: 3px 0 0 3px; display: flex; align-items: center; padding-left: 4px; color: #c4c4c4; font-weight: bold; gap: 2px; }
.canvas { flex: none; width: 871px; height: 527px; margin-top: 5px; background: #000; display: block; }
.lbl { font-family: "DejaVu Sans", sans-serif; letter-spacing: 0; }
.mouse { flex: none; height: 21px; margin-top: 3px; border-top: 2px solid #222; border-bottom: 1px solid #aaa; background: linear-gradient(#e6e6e6, #bcbcbc); display: grid; grid-template-columns: 234px 507px auto; align-items: center; }
.stat { height: 19px; display: grid; grid-template-columns: 84px 85px 48px 16px 116px auto; padding-left: 406px; align-items: center; background: #f0f0f0; }
.stat span { line-height: 17px; }
.stat span:nth-child(1), .stat span:nth-child(3), .stat span:nth-child(5), .stat span:nth-child(6) { border-left: 1px solid #333; padding-left: 7px; }
.stat span:nth-child(5), .stat span:nth-child(6) { padding-left: 8px; letter-spacing: .3px; }

.dlg { left: 260px; top: 0; width: 426px; height: 965px; background: #efefef; border-left: 1px solid #c8c8c8; border-right: 1px solid #999; }
.dt { height: 27px; flex: none; border-bottom: 1px solid #888; display: grid; grid-template-columns: 294px 12px; padding-left: 108px; font: 600 14px/18px "Open Sans", sans-serif; letter-spacing: .17px; background: #f2f2f2; color: #333; }
.dt .x { stroke: #333; margin-top: 5px; stroke-width: 2.200; }
.dmain { display: flex; flex: none; height: 916px; }
.pane { width: 408px; flex: none; display: flex; flex-direction: column; }
.row { display: grid; align-items: center; flex: none; }
.tails { height: 7px; flex: none; display: grid; grid-template-columns: 71px 54px 74px 10px; padding: 2px 0 0 107px; }
.tails i { width: 1px; height: 1px; background: #555; }
.rads { height: 66px; flex: none; display: grid; grid-template: repeat(3, 21.500px) / 71px 54px 74px 1fr; padding-left: 89px; align-items: center; border-bottom: 1px solid #777; margin-bottom: 1px; }
label { display: flex; align-items: center; gap: 5px; }
.rd { width: 12px; height: 12px; flex: none; border-radius: 50%; background: radial-gradient(circle at 50% 30%, #fff 40%, #ccc); border: 1px solid #c4c4c4; border-bottom-color: #777; }
.rd.on { background: radial-gradient(circle, #c4001a 2.800px, #f6dcdc 3.600px); }
.ck { width: 12px; height: 12px; flex: none; background: linear-gradient(#fff, #e2e2e2); border: 1px solid #cfcfcf; border-bottom-color: #888; border-right-color: #999; border-radius: 1px; }
.ck.on::after { content: ""; display: block; width: 4px; height: 7px; margin: 0 0 0 3px; border: solid #c8001a; border-width: 0 2px 2px 0; transform: rotate(42deg); }
.qt { height: 28px; line-height: 29px; padding-left: 94px; flex: none; }
.eng { height: 24px; grid-template-columns: 97px 76px auto; padding-left: 4px; margin-top: -1px; margin-bottom: 1px; }
.eng > span { margin-top: -6px; }
.eng > label { margin-left: 1px; }
.fs { width: 399px; margin-left: 4px; flex: none; border: 1px solid #b5b5b5; border-radius: 4px; display: flex; flex-direction: column; }
.f1 { margin-top: 27px; height: 215px; }
.cap { padding-left: 16px; height: 20px; line-height: 20px; flex: none; }
.f1 .cap { padding-left: 18px; height: 25px; line-height: 29px; }
.lst { margin-left: 5px; width: 387px; background: #fff; border: solid #222; border-width: 2px 0 0 1px; font: 11.500px/13px "Liberation Mono", monospace; letter-spacing: 0; flex: none; }
.lst > div { height: 14px; display: grid; grid-template-columns: 13px 49px 77px 63px 70px 56px 1fr; padding-left: 3px; }
.lh { height: 25px; }
.lb { height: 54px; margin-top: 6px; line-height: 14px; }
.lh > div > span:nth-child(6) { margin-left: -14px; }
.lst > div > span:nth-child(7) { text-align: right; margin-right: 33px; }
.hl { background: #7c7979; color: #fff; }
.in { height: 21px; background: #fff; border: solid #aaa; border-width: 2px 1px 0 1px; border-bottom: 1px solid #eee; font: 11.500px/17px "Liberation Mono", monospace; letter-spacing: 0; padding-left: 3px; border-radius: 2px; border-right-color: #ddd; }
.in.ro { background: #efefef; }
.in.sans { font: 12px/18px "Liberation Sans", sans-serif; letter-spacing: .4px; }
.ed { height: 20px; margin-top: 9px; padding-left: 15px; grid-template-columns: 60px 60px 61px 9px 82px 1px 22px 7px 61px; }
.ed .cb { grid-column: 5; align-self: start; }
.ed .four { grid-column: 7; padding-left: 2px; }
.ed .in:last-child { grid-column: 9; }
mark { background: #777; color: #fff; }
.cb { height: 18px; display: flex; background: linear-gradient(#fff, #e4e4e4); border: 1px solid #c0c0c0; border-bottom-color: #888; border-radius: 3px; }
.cb > span { flex: 1; padding-left: 1px; line-height: 16px; }
.cb > i { width: 16px; margin: -1px; background: linear-gradient(90deg, #cf0d1c, #a3000e); border-radius: 0 3px 3px 0; display: flex; align-items: center; justify-content: center; }
button { height: 22px; padding: 0; border: 1px solid #aaa; border-bottom: 2px solid #8e8e8e; border-top-color: #ccc; border-radius: 11px; background: linear-gradient(#fff, #d6d6d6); font: inherit; letter-spacing: inherit; color: #333; }
.bt { margin-top: 10px; height: 22px; padding-left: 20px; grid-template-columns: 80px 48px 148px; column-gap: 0; }
.bt button:nth-child(2) { margin: 0 -12px 0 12px; }
.bt button:nth-child(3) { margin: 0 -47px 0 47px; }
.fq { margin-top: 11px; height: 21px; padding-left: 16px; grid-template-columns: 226px 52px; }
.f2 { margin-top: 10px; height: 86px; padding: 4px 0 0 9px; }
.h1 { height: 20px; grid-template-columns: 75px 76px; padding-top: 1px; }
.h2 { height: 20px; margin-top: 5px; grid-template-columns: 239px 57px; }
.f2 .cb { margin-top: -3px; }
.h3 { height: 21px; margin-top: 7px; grid-template-columns: 183px 118px; }
.f3 { margin-top: 6px; height: 96px; padding-top: 3px; }
.a1 { height: 20px; margin-top: 1px; padding-left: 24px; grid-template-columns: 99px 78px auto; }
.a2 { height: 21px; margin-top: 1px; padding-left: 9px; grid-template-columns: 243px 67px; }
.a3 { height: 18px; margin-top: 10px; padding-left: 9px; grid-template-columns: 245px 41px auto; }
.f4 { margin-top: 6px; height: 308px; }
.two { display: flex; height: 88px; flex: none; }
.lc { width: 184px; padding: 4px 0 0 16px; display: flex; flex-direction: column; }
.sw { height: 20px; grid-template-columns: 48px 37px 8px 12px; }
.sw > span { margin-top: -3px; }
.sw .cb { margin-top: 2px; }
.sw .ck { grid-column: 4; margin-top: -2px; }
.wide { width: 134px; height: 19px; margin: 5px 0 0 -2px; }
.rc { width: 209px; padding-top: 11px; }
.v1 { height: 21px; grid-template-columns: 123px 41px auto; }
.v2 { height: 22px; margin: 4px 0 8px; grid-template-columns: 93px 112px; }
.rc > button { display: block; width: 209px; height: 18px; line-height: 14px; margin-left: 1px; }
.s { margin-top: 5px; height: 43px; grid-template-columns: 123px 36px 92px 43px 77px; padding-left: 18px; }
.s > span { margin-top: -7px; }
.s > .in { margin-top: -6px; width: 77px; }
.st { display: grid; grid-template-rows: 21.500px 21.500px; align-items: center; }
.c3 { margin-top: 7px; }
.t { margin-top: 5px; height: 43px; grid-template-columns: 145px 149px 77px; padding-left: 18px; }
.t > .in { margin-top: -2px; }
.p1 { margin-top: 19px; height: 20px; padding-left: 9px; grid-template-columns: 124px auto; }
.p2 { margin-top: 13px; height: 20px; padding-left: 9px; grid-template-columns: 285px 41px auto; }
.p2 > span { letter-spacing: .25px; }
.en { margin-top: 9px; height: 22px; padding-left: 14px; grid-template-columns: 55px 246px 78px; }
.en .ck { margin-top: 4px; }
.vs { width: 16px; background: #a2a2a2; display: flex; flex-direction: column; }
.vs > i { height: 16px; background: #ccc; color: #fff; font: 10px/14px "DejaVu Sans", sans-serif; text-align: center; }
.vs > i:first-child { margin-top: 4px; height: 12px; }
.trk { flex: 1; padding-top: 75px; background: linear-gradient(90deg, #8f8f8f, #aaa); display: flex; }
.trk em { flex: 1; border-radius: 8px; background: linear-gradient(90deg, #c4c4c4, #b0b0b0); border: 1px solid #ccc; border-bottom-color: #777; display: flex; align-items: center; justify-content: center; }
.trk em i { width: 6px; height: 8px; background: repeating-linear-gradient(#888 0 1px, transparent 1px 3px); }
.acts { display: grid; grid-template-columns: 46px 58px 69px 52px 49px; column-gap: 4px; padding: 4px 0 0 134px; }
.acts button { height: 20px; line-height: 14px; }
.acts .ok { background: linear-gradient(#d80c1c, #a8000e); border-color: #8d0010; color: #fff; font-weight: bold; }
</style>
